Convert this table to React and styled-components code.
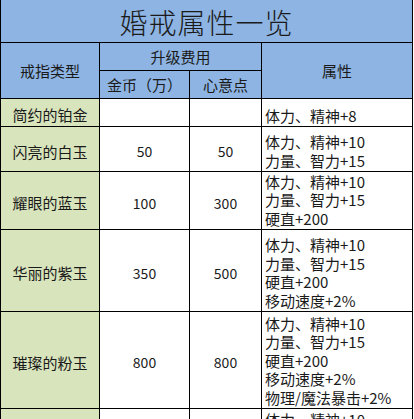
import React from "react";
import styled, { createGlobalStyle } from "styled-components";

const GlobalStyle = createGlobalStyle`
  html, body {
    margin: 0;
    padding: 0;
    background: #ffffff;
  }
  body {
    font-family: "Noto Sans CJK SC", "Liberation Sans", sans-serif;
    color: #111;
  }
`;

const Sheet = styled.div`
  display: grid;
  width: 413px;
  grid-template-columns: 98px 89px 71px 150px;
  grid-template-rows: 42px 27px 27px 27px 44px 57px 81px 96px 130px;
  gap: 1px;
  padding: 0 1px 0 1px;
  box-sizing: border-box;
  background: #000;
`;

const Title = styled.div`
  grid-column: 1 / 5;
  background: #8db4e2;
  display: flex;
  align-items: center;
  justify-content: center;
  font-size: 28px;
  font-weight: 300;
  letter-spacing: 1px;
  color: #1a1a1a;
  padding-top: 2px;
`;

const HeadCell = styled.div`
  background: #8db4e2;
  display: flex;
  align-items: center;
  justify-content: center;
  font-size: 15px;
  color: #1a1a1a;
  grid-row: ${(p) => p.$row || "auto"};
  grid-column: ${(p) => p.$col || "auto"};
`;

const NameCell = styled.div`
  background: #d8e4bc;
  display: flex;
  align-items: center;
  justify-content: center;
  font-size: 15px;
  padding-top: 4px;
  color: #1a1a1a;
`;

const NumCell = styled.div`
  background: #fff;
  display: flex;
  align-items: center;
  justify-content: center;
  font-size: 14px;
  padding-top: 4px;
  color: #1a1a1a;
`;

const AttrCell = styled.div`
  background: #fff;
  display: flex;
  flex-direction: column;
  justify-content: ${(p) => (p.$top ? "flex-start" : "flex-end")};
  padding: ${(p) => (p.$top ? "2px 0 0 3px" : "0 0 1px 3px")};
  font-size: 15px;
  line-height: 18.5px;
  color: #1a1a1a;
  white-space: nowrap;
`;

const rings = [
  { name: "简约的铂金", gold: "", heart: "", attrs: ["体力、精神+8"] },
  { name: "闪亮的白玉", gold: "50", heart: "50", attrs: ["体力、精神+10", "力量、智力+15"] },
  {
    name: "耀眼的蓝玉",
    gold: "100",
    heart: "300",
    attrs: ["体力、精神+10", "力量、智力+15", "硬直+200"],
  },
  {
    name: "华丽的紫玉",
    gold: "350",
    heart: "500",
    attrs: ["体力、精神+10", "力量、智力+15", "硬直+200", "移动速度+2%"],
  },
  {
    name: "璀璨的粉玉",
    gold: "800",
    heart: "800",
    attrs: ["体力、精神+10", "力量、智力+15", "硬直+200", "移动速度+2%", "物理/魔法暴击+2%"],
  },
  {
    name: "",
    gold: "",
    heart: "",
    top: true,
    attrs: ["体力、精神+10", "力量、智力+15", "硬直+200", "移动速度+2%", "物理/魔法暴击+2%"],
  },
];

const App = () => {
  return (
    <>
      <GlobalStyle />
      <Sheet>
        <Title>婚戒属性一览</Title>
        <HeadCell $row="2 / 4" $col="1">戒指类型</HeadCell>
        <HeadCell $row="2" $col="2 / 4">升级费用</HeadCell>
        <HeadCell $row="2 / 4" $col="4">属性</HeadCell>
        <HeadCell $row="3" $col="2">金币（万）</HeadCell>
        <HeadCell $row="3" $col="3">心意点</HeadCell>
        {rings.map((r, i) => (
          <React.Fragment key={i}>
            <NameCell>{r.name}</NameCell>
            <NumCell>{r.gold}</NumCell>
            <NumCell>{r.heart}</NumCell>
            <AttrCell $top={r.top}>
              {r.attrs.map((a) => (
                <span key={a}>{a}</span>
              ))}
            </AttrCell>
          </React.Fragment>
        ))}
      </Sheet>
    </>
  );
};

export default App;
